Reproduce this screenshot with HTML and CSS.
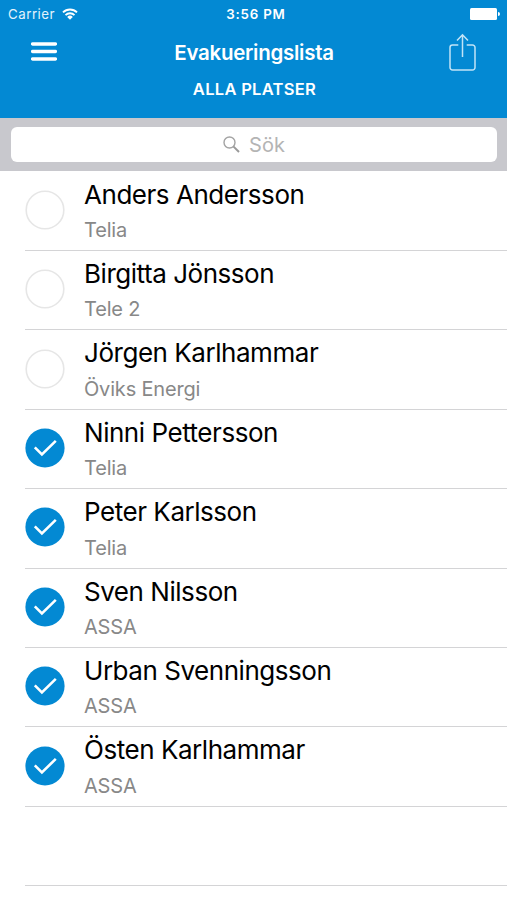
FILE: index.html
```html
<!DOCTYPE html>
<html lang="sv">
<head>
<meta charset="utf-8">
<title>Evakueringslista</title>
<link rel="stylesheet" href="styles.css">
</head>
<body>
<svg class="defs" aria-hidden="true">
  <symbol id="check" viewBox="0 0 40 40"><circle cx="20" cy="20" r="19.6" fill="#0389d3"/><path d="M9.8 19.3 16.9 26.4 30.8 12.9" fill="none" stroke="#fff" stroke-width="2.6"/></symbol>
  <symbol id="empty" viewBox="0 0 40 40"><circle cx="20" cy="20" r="18.8" fill="#fff" stroke="#e6e6e6" stroke-width="1.6"/></symbol>
</svg>
<header class="header">
  <div class="status">
    <div class="carrier"><span>Carrier</span>
      <svg class="wifi" viewBox="0 0 16 12"><g fill="none" stroke="#fff" stroke-width="1.9"><path d="M1 4.4a10 10 0 0 1 14 0"/><path d="M3.5 7.1a6.4 6.4 0 0 1 9 0"/></g><path d="M8 11.7 5.2 8.9a4 4 0 0 1 5.6 0z" fill="#fff"/></svg>
    </div>
    <span class="time">3:56 PM</span>
    <svg class="battery" viewBox="0 0 30 12"><rect width="27" height="12" rx="1.5" fill="#fff"/><path d="M28 4a2 2 0 0 1 0 4z" fill="#fff"/></svg>
  </div>
  <div class="nav">
    <svg class="menu" viewBox="0 0 26 20"><path d="M1.5 2h23M1.5 9.5h23M1.5 17h23" stroke="#fff" stroke-width="3.3" stroke-linecap="round"/></svg>
    <h1 class="title">Evakueringslista</h1>
    <svg class="share" viewBox="0 0 27 38"><g fill="none" stroke="#c2e4f7" stroke-width="1.5"><path d="M9.3 12H3.5A2.5 2.5 0 0 0 1 14.500v20A2.500 2.500 0 0 0 3.500 37h20a2.500 2.500 0 0 0 2.500-2.500v-20A2.500 2.500 0 0 0 23.500 12h-5.800M13.500 24V2M8 7.500l5.500-5.700L19 7.500"/></g></svg>
  </div>
  <div class="subtitle">ALLA PLATSER</div>
</header>
<div class="searchbar">
  <div class="field">
    <svg class="glass" viewBox="0 0 17 17"><circle cx="6.500" cy="6.500" r="5.500" fill="none" stroke="#a3a3a3" stroke-width="1.400"/><path d="M10.600 10.600 16 16" stroke="#999" stroke-width="2"/></svg>
    <span>Sök</span>
  </div>
</div>
<ul class="list">
  <li class="row"><svg class="mark"><use href="#empty"/></svg><div><div class="name">Anders Andersson</div><div class="org">Telia</div></div></li>
  <li class="row"><svg class="mark"><use href="#empty"/></svg><div><div class="name">Birgitta Jönsson</div><div class="org">Tele 2</div></div></li>
  <li class="row"><svg class="mark"><use href="#empty"/></svg><div><div class="name">Jörgen Karlhammar</div><div class="org">Öviks Energi</div></div></li>
  <li class="row"><svg class="mark"><use href="#check"/></svg><div><div class="name">Ninni Pettersson</div><div class="org">Telia</div></div></li>
  <li class="row"><svg class="mark"><use href="#check"/></svg><div><div class="name">Peter Karlsson</div><div class="org">Telia</div></div></li>
  <li class="row"><svg class="mark"><use href="#check"/></svg><div><div class="name">Sven Nilsson</div><div class="org">ASSA</div></div></li>
  <li class="row"><svg class="mark"><use href="#check"/></svg><div><div class="name">Urban Svenningsson</div><div class="org">ASSA</div></div></li>
  <li class="row"><svg class="mark"><use href="#check"/></svg><div><div class="name">Östen Karlhammar</div><div class="org">ASSA</div></div></li>
  <li class="row"></li>
</ul>
</body>
</html>
```
FILE: styles.css
```css
* { box-sizing: border-box; }
body { margin: 0; height: 900px; overflow: hidden; background: #fff; font-family: Inter, "Liberation Sans", sans-serif; color: #000; }
svg { display: block; flex: none; }
.defs { width: 0; height: 0; position: absolute; }
.header { height: 118px; background: #0389d3; color: #fff; }
.status { height: 28px; padding: 0 7px 0 8px; display: grid; grid-template-columns: 1fr auto 1fr; align-items: center; font-size: 13.3px; line-height: 28px; }
.carrier { display: flex; align-items: center; gap: 7px; letter-spacing: 0.5px; color: #e3f3fc; }
.wifi { width: 16px; height: 12px; }
.time { font-weight: 600; letter-spacing: 0.8px; margin-left: 4px; }
.battery { width: 30px; height: 12px; justify-self: end; }
.nav { height: 48px; padding: 0 31px; display: grid; grid-template-columns: 1fr auto 1fr; align-items: center; }
.menu { width: 26px; height: 20px; margin-bottom: 2px; }
.title { margin: 0; font-size: 20.5px; font-weight: 600; line-height: 49px; letter-spacing: -0.27px; padding-left: 1px; }
.share { width: 27px; height: 38px; justify-self: end; margin-bottom: 2px; }
.subtitle { text-align: center; font-size: 16.5px; font-weight: 600; line-height: 27px; padding-left: 2px; letter-spacing: 0.3px; }
.searchbar { height: 53px; padding: 9px 10px 9px 11px; background: #c8c8cd; }
.field { height: 35px; border-radius: 6px; background: #fff; display: flex; align-items: center; justify-content: center; gap: 9px; font-size: 20px; color: #b4b4b4; }
.glass { width: 17px; height: 17px; }
.list { list-style: none; margin: 0; padding: 0.6px 0 0 25px; }
.row { height: 79.4px; display: flex; gap: 19px; border-bottom: 1.4px solid #d4d4d6; }
.mark { width: 40px; height: 40px; margin-top: 18.2px; }
.name { font-size: 26px; line-height: 32px; margin-top: 7.1px; white-space: nowrap; letter-spacing: -0.46px; }
.org { font-size: 20px; line-height: 26px; margin-top: 6.3px; color: #888; white-space: nowrap; letter-spacing: -0.18px; }
```
